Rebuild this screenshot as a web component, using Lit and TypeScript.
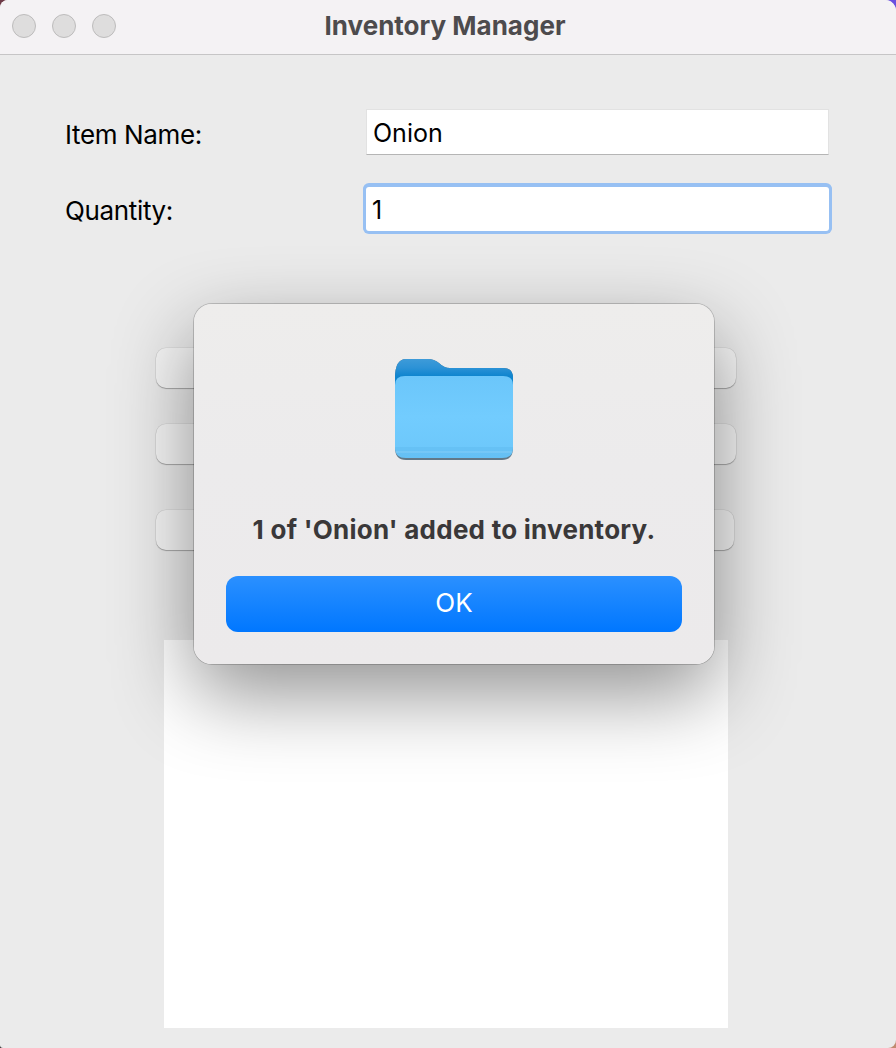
import { LitElement, html, css } from 'lit';
import { customElement, property } from 'lit/decorators.js';

@customElement('folder-icon')
export class FolderIcon extends LitElement {
  static styles = css`
    :host { display: block; width: 120px; height: 104px; }
    svg { display: block; }
  `;

  render() {
    return html`
      <svg width="120" height="104" viewBox="0 0 120 104">
        <defs>
          <linearGradient id="back" gradientUnits="userSpaceOnUse" x1="0" y1="0" x2="0" y2="18">
            <stop offset="0" stop-color="#409cd9"></stop>
            <stop offset="0.55" stop-color="#2c92d6"></stop>
            <stop offset="1" stop-color="#0f85cf"></stop>
          </linearGradient>
          <linearGradient id="front" x1="0" y1="0" x2="0" y2="1">
            <stop offset="0" stop-color="#6bc6fa"></stop>
            <stop offset="0.5" stop-color="#72ccfe"></stop>
            <stop offset="1" stop-color="#6cc7fa"></stop>
          </linearGradient>
        </defs>
        <path fill="#627887" d="M1 20 Q1 1 12 1 H34 Q40 1 45 5 Q50 10 56 10 H110 Q119 10 119 20 V90 Q119 102 108 102 H12 Q1 102 1 90 Z"></path>
        <path fill="url(#back)" d="M1 20 Q1 1 12 1 H34 Q40 1 45 5 Q50 10 56 10 H109 Q119 10 119 20 V50 H1 Z"></path>
        <path fill="url(#front)" d="M1 27 Q1 18 11 18 H109 Q119 18 119 27 V90 Q119 100 108 100 H12 Q1 100 1 90 Z"></path>
        <path fill="#4ea7dd" fill-opacity="0.22" d="M1 89 H119 V90 Q119 100 108 100 H12 Q1 100 1 90 Z"></path>
        <path fill="#ffffff" fill-opacity="0.1" d="M1 93 H119 V95 H1 Z"></path>
      </svg>
    `;
  }
}

@customElement('alert-dialog')
export class AlertDialog extends LitElement {
  @property() message = '';

  static styles = css`
    :host {
      position: absolute;
      left: 194px;
      top: 304px;
      width: 520px;
      height: 360px;
      box-sizing: border-box;
      padding: 54px 32px 0;
      display: flex;
      flex-direction: column;
      align-items: center;
      background: linear-gradient(#eeedec, #ecebec 45%, #ecEAEB);
      border-radius: 18px;
      box-shadow: 0 0 0 1px rgba(0, 0, 0, 0.18), 0 30px 80px rgba(0, 0, 0, 0.43);
    }
    .msg {
      margin-top: 53px;
      font: 700 26px/30px Inter, sans-serif;
      letter-spacing: 0.25px;
      white-space: nowrap;
      color: #3a3839;
    }
    .ok {
      margin-top: 31px;
      width: 456px;
      height: 56px;
      border: 0;
      padding: 0 0 3px;
      border-radius: 12px;
      background: linear-gradient(#2b90ff, #0077ff);
      color: #fff;
      font: 400 26px Inter, sans-serif;
    }
  `;

  render() {
    return html`
      <folder-icon></folder-icon>
      <div class="msg">${this.message}</div>
      <button class="ok">OK</button>
    `;
  }
}

@customElement('app-root')
export class AppRoot extends LitElement {
  static styles = css`
    :host {
      display: block;
      position: relative;
      width: 896px;
      height: 1048px;
      overflow: hidden;
      background:
        linear-gradient(#6d3a47, #6d3a47) 0 0 / 448px 524px no-repeat,
        linear-gradient(#6a4fe0, #6a4fe0) 100% 0 / 448px 524px no-repeat,
        linear-gradient(#333, #333) 0 100% / 448px 524px no-repeat,
        linear-gradient(#c08a70, #c08a70) 100% 100% / 448px 524px no-repeat;
    }
    .window {
      height: 1048px;
      border-radius: 8px 11px 8px 3px;
      overflow: hidden;
      background: #ebebeb;
      display: flex;
      flex-direction: column;
    }
    .titlebar {
      flex: none;
      height: 55px;
      box-sizing: border-box;
      padding: 0 6px 2px 0;
      border-bottom: 1px solid #c6c5c6;
      background: #f4f2f4;
      position: relative;
      display: flex;
      align-items: center;
      justify-content: center;
    }
    .lights {
      position: absolute;
      left: 12px;
      top: 14px;
      display: flex;
      gap: 16px;
    }
    .lights span {
      width: 24px;
      height: 24px;
      box-sizing: border-box;
      border-radius: 50%;
      background: #dedddd;
      border: 1px solid #bdbcbc;
    }
    .title {
      font: 700 26px/30px Inter, sans-serif;
      color: #4d4b4d;
    }
    .content {
      flex: 1;
      display: flex;
      flex-direction: column;
      padding: 54px 65px 20px;
    }
    .row {
      display: grid;
      grid-template-columns: 301px 463px;
      align-items: center;
      height: 46px;
    }
    .row + .row { margin-top: 30px; }
    label {
      padding-top: 6px;
      font: 400 26px/30px Inter, sans-serif;
      letter-spacing: -0.35px;
      color: #000;
    }
    .input {
      height: 46px;
      box-sizing: border-box;
      padding-left: 6px;
      background: #fff;
      border: 1px solid #e2e2e2;
      border-bottom: 1px solid #b5b5b5;
      font: 400 25px/46px Inter, sans-serif;
      color: #000;
    }
    .input.focus {
      align-self: end;
      height: 44px;
      border: 0;
      border-radius: 3px;
      line-height: 46px;
      box-shadow: 0 0 0 3px #97c0f3, 0 -1px 0 3px #97c0f3;
    }
    .buttons {
      display: flex;
      flex-direction: column;
      margin: 117px 95px 0 91px;
    }
    .btn {
      height: 40px;
      box-sizing: border-box;
      border-radius: 10px;
      background: #f5f5f5;
      box-shadow: 0 0 0 0.5px rgba(0, 0, 0, 0.1), 0 1px 1px rgba(0, 0, 0, 0.25);
    }
    .btn:nth-child(2) { margin-top: 36px; }
    .btn:nth-child(3) { margin-top: 46px; margin-right: 2px; }
    .list {
      width: 564px;
      height: 388px;
      margin: 90px 0 0 99px;
      background: #fff;
    }
  `;

  render() {
    return html`
      <div class="window">
        <div class="titlebar">
          <div class="lights"><span></span><span></span><span></span></div>
          <div class="title">Inventory Manager</div>
        </div>
        <div class="content">
          <div class="row">
            <label>Item Name:</label>
            <div class="input">Onion</div>
          </div>
          <div class="row">
            <label>Quantity:</label>
            <div class="input focus">1</div>
          </div>
          <div class="buttons">
            <div class="btn"></div>
            <div class="btn"></div>
            <div class="btn"></div>
          </div>
          <div class="list"></div>
        </div>
      </div>
      <alert-dialog message="1 of 'Onion' added to inventory."></alert-dialog>
    `;
  }
}
